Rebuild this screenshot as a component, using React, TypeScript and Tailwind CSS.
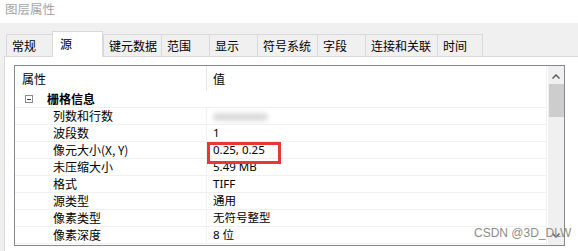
import React from 'react'

const tabs = [
  { label: '常规', w: 'w-[46px]' },
  { label: '源', w: 'w-[51px]', active: true },
  { label: '键元数据', w: 'w-[58px]' },
  { label: '范围', w: 'w-[48px]' },
  { label: '显示', w: 'w-[48px]' },
  { label: '符号系统', w: 'w-[60px]' },
  { label: '字段', w: 'w-[48px]' },
  { label: '连接和关联', w: 'w-[72px]' },
  { label: '时间', w: 'w-[46px]', last: true },
]

const rows: { name: React.ReactNode; value: React.ReactNode }[] = [
  {
    name: '列数和行数',
    value: <div className="mt-[1px] h-[8px] w-[55px] rounded-full bg-[#dcdcdc] blur-[2px]" />,
  },
  { name: '波段数', value: '1' },
  { name: '像元大小(X, Y)', value: '0.25, 0.25' },
  { name: '未压缩大小', value: '5.49 MB' },
  { name: '格式', value: 'TIFF' },
  { name: '源类型', value: '通用' },
  { name: '像素类型', value: '无符号整型' },
  { name: '像素深度', value: '8 位' },
]

function Tab({ label, w, active, last }: { label: string; w: string; active?: boolean; last?: boolean }) {
  if (active) {
    return (
      <div
        className={`${w} relative z-10 -mb-px flex h-[26px] items-start border-x border-t border-[#d9d9d9] bg-white pt-[2px] pl-[7px] text-[12px] leading-[20px] text-black`}
      >
        {label}
      </div>
    )
  }
  return (
    <div
      className={`${w} flex h-[22px] items-center border-t border-l border-[#d9d9d9] ${last ? 'border-r' : ''} bg-[#f0f0f0] pl-[5px] text-[12px] leading-[20px] text-black`}
    >
      {label}
    </div>
  )
}

export default function App() {
  return (
    <div className="relative h-[251px] w-[578px] overflow-hidden bg-[#f0f0f0] font-['Noto_Sans_CJK_SC',sans-serif] text-black">
      <div className="h-[23px] bg-white pt-[1px] pl-[5px] text-[12.5px] leading-[15px] text-[#a4a4a4]">图层属性</div>

      <div className="flex h-[33px] items-end pl-[6px]">
        {tabs.map((t) => (
          <Tab key={t.label} {...t} />
        ))}
      </div>

      <div className="ml-[4px] h-[200px] border-t border-l border-[#d9d9d9] bg-white pt-[8px] pl-[9px]">
        <div className="flex h-[181px] w-[551px] border border-[#828790] bg-white">
          <div className="flex w-[532px] flex-col border-r border-[#f0f0f0] text-[12px] leading-[16px]">
            <div className="flex h-[25px] shrink-0">
              <div className="flex w-[192px] items-center border-r border-[#e5e5e5] pl-[7px]">属性</div>
              <div className="flex flex-1 items-center pl-[6px]">值</div>
            </div>

            <div className="flex h-[17px] shrink-0 border-b border-[#f0f0f0]">
              <div className="flex w-[192px] items-center">
                <div className="ml-[10px] flex h-[8px] w-[8px] items-center justify-center border border-[#8a8a8a]">
                  <div className="h-px w-[4px] bg-[#333]" />
                </div>
                <span className="ml-[14px] font-bold">栅格信息</span>
              </div>
              <div className="flex-1" />
            </div>

            {rows.map((r, i) => (
              <div key={i} className="flex h-[17px] shrink-0 border-b border-[#f0f0f0]">
                <div className="flex w-[192px] items-center border-r border-[#f0f0f0] pl-[38px]">{r.name}</div>
                <div className="flex flex-1 items-center pl-[6px] font-['Noto_Sans','Noto_Sans_CJK_SC',sans-serif] text-[11.5px]">
                  {r.value}
                </div>
              </div>
            ))}
          </div>

          <div className="ml-[1px] flex w-[16px] flex-col items-center bg-[#f0f0f0]">
            <svg width="8" height="5" viewBox="0 0 8 5" className="mt-[8px]">
              <path d="M0.5 4.5 L4 1 L7.5 4.5" stroke="#606060" strokeWidth="1.5" fill="none" />
            </svg>
            <div className="mt-[5px] h-[33px] w-[15px] bg-[#cdcdcd]" />
            <div className="flex-1" />
            <svg width="8" height="5" viewBox="0 0 8 5" className="mb-[7px]">
              <path d="M0.5 0.5 L4 4 L7.5 0.5" stroke="#606060" strokeWidth="1.5" fill="none" />
            </svg>
          </div>
        </div>
      </div>

      <div className="absolute top-[142px] left-[207px] h-[22px] w-[74px] border-[3px] border-[#e53935]" />

      <div className="absolute top-[226px] left-[474px] font-['Liberation_Sans',sans-serif] text-[12px] leading-[14px] text-[#8c8c8c]">
        CSDN @3D_DLW
      </div>
    </div>
  )
}
